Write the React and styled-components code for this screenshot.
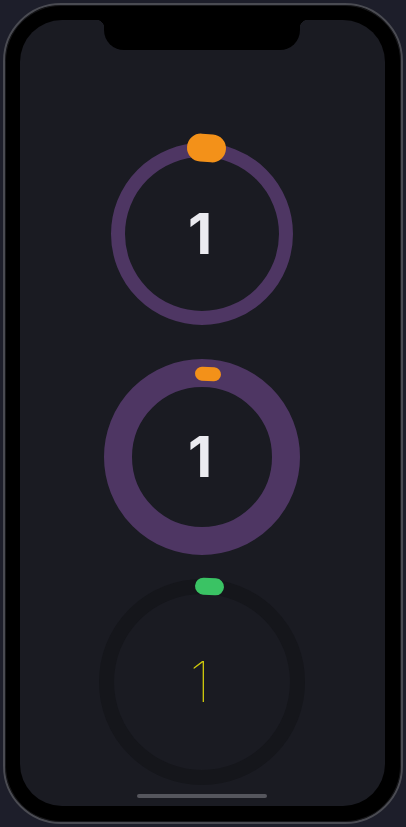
import React from "react";
import styled, { createGlobalStyle } from "styled-components";

const Global = createGlobalStyle`
  html, body {
    margin: 0;
    padding: 0;
    background: #1d1e2a;
    width: 406px;
    height: 827px;
    overflow: hidden;
  }
  #root { width: 406px; height: 827px; }
`;

const Page = styled.div`
  box-sizing: border-box;
  width: 406px;
  height: 827px;
  padding: 3px 3px 3px 3px;
  display: flex;
  justify-content: center;
  background: #1d1e2a;
`;

const Phone = styled.div`
  box-sizing: border-box;
  width: 400px;
  height: 821px;
  border-radius: 58px;
  background: #000;
  border: 2px solid #4a4b52;
  padding: 15px 16px 16px 15px;
  display: flex;
  box-shadow: inset 0 0 0 1px #17171a;
`;

const Screen = styled.div`
  position: relative;
  flex: 1;
  border-radius: 42px;
  background: #1a1b22;
  overflow: hidden;
  display: flex;
  flex-direction: column;
  align-items: center;
  padding-top: 123px;
  padding-right: 1px;
`;

const Notch = styled.div`
  position: absolute;
  top: 0;
  left: 84px;
  width: 196px;
  height: 30px;
  background: #000;
  border-radius: 0 0 20px 20px;
  &::before, &::after {
    content: "";
    position: absolute;
    top: 0;
    width: 8px;
    height: 8px;
  }
  &::before {
    left: -8px;
    background: radial-gradient(circle at 0 100%, transparent 8px, #000 8.5px);
  }
  &::after {
    right: -8px;
    background: radial-gradient(circle at 100% 100%, transparent 8px, #000 8.5px);
  }
`;

const Dial = styled.div`
  position: relative;
  box-sizing: border-box;
  flex: none;
  width: ${(p) => p.$size}px;
  height: ${(p) => p.$size}px;
  margin-top: ${(p) => p.$gap}px;
  border-radius: 50%;
  border: ${(p) => p.$thickness}px solid ${(p) => p.$ring};
  display: flex;
  align-items: center;
  justify-content: center;
`;

const Knob = styled.div`
  position: absolute;
  left: ${(p) => p.$left - p.$thickness}px;
  top: ${(p) => p.$top - p.$thickness}px;
  width: ${(p) => p.$w}px;
  height: ${(p) => p.$h}px;
  border-radius: ${(p) => p.$h / 2}px;
  background: ${(p) => p.$color};
  transform: rotate(${(p) => p.$tilt || 0}deg);
`;

const Value = styled.span`
  font-family: Inter, "Liberation Sans", sans-serif;
  font-size: 56px;
  line-height: 1;
  font-weight: ${(p) => (p.$thin ? 100 : 700)};
  color: ${(p) => (p.$thin ? "#cfca0c" : "#ebebf0")};
  transform: translate(-2px, 0);
`;

const HomeBar = styled.div`
  position: absolute;
  bottom: 8px;
  left: 117px;
  width: 130px;
  height: 4px;
  border-radius: 2px;
  background: #55565d;
`;

const dials = [
  {
    size: 182, thickness: 14, ring: "#4e3663", gap: 0,
    knob: { left: 76, top: -9, w: 39, h: 28, color: "#f39119", tilt: 4 },
    thin: false,
  },
  {
    size: 196, thickness: 28, ring: "#4e3663", gap: 34,
    knob: { left: 91, top: 8, w: 26, h: 14, color: "#f39119", tilt: 3 },
    thin: false,
  },
  {
    size: 206, thickness: 15, ring: "#15161b", gap: 24,
    knob: { left: 96, top: -1, w: 29, h: 17, color: "#3ac364", tilt: 3 },
    thin: true,
  },
];

export default function App() {
  return (
    <>
      <Global />
      <Page>
        <Phone>
          <Screen>
            <Notch />
            {dials.map((d, i) => (
              <Dial key={i} $size={d.size} $thickness={d.thickness} $ring={d.ring} $gap={d.gap}>
                <Knob
                  $left={d.knob.left}
                  $top={d.knob.top}
                  $w={d.knob.w}
                  $h={d.knob.h}
                  $color={d.knob.color}
                  $tilt={d.knob.tilt}
                  $thickness={d.thickness}
                />
                <Value $thin={d.thin}>1</Value>
              </Dial>
            ))}
            <HomeBar />
          </Screen>
        </Phone>
      </Page>
    </>
  );
}
